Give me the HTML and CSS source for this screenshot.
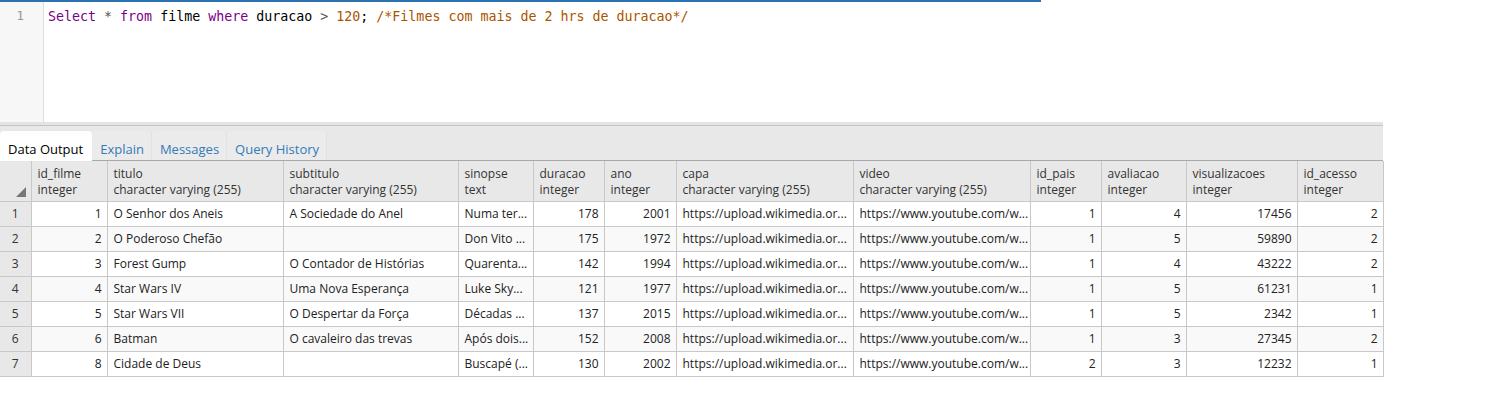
FILE: index.html
```html
<!DOCTYPE html>
<html>
<head>
<meta charset="utf-8">
<link rel="stylesheet" href="styles.css">
</head>
<body>
<div class="topbar"></div>
<div class="editor">
  <div class="gutter"><span class="lineno">1</span></div>
  <div class="code"><span class="kw">Select</span> <span class="op">*</span> <span class="kw">from</span> filme <span class="kw">where</span> duracao <span class="op">&gt;</span> <span class="num">120</span>; <span class="cm">/*Filmes com mais de 2 hrs de duracao*/</span></div>
</div>
<div class="panel">
  <div class="tabs">
    <div class="tab active">Data Output</div>
    <div class="tab">Explain</div>
    <div class="tab">Messages</div>
    <div class="tab">Query History</div>
  </div>
  <table class="grid">
    <colgroup>
      <col class="w31"><col class="w76"><col class="w176"><col class="w175"><col class="w75"><col class="w71"><col class="w72"><col class="w177"><col class="w177"><col class="w71"><col class="w85"><col class="w111"><col class="w86">
    </colgroup>
    <thead>
      <tr>
        <th class="corner"><span class="tri"></span></th>
        <th>id_filme<br>integer</th>
        <th>titulo<br>character varying (255)</th>
        <th>subtitulo<br>character varying (255)</th>
        <th>sinopse<br>text</th>
        <th>duracao<br>integer</th>
        <th>ano<br>integer</th>
        <th>capa<br>character varying (255)</th>
        <th>video<br>character varying (255)</th>
        <th>id_pais<br>integer</th>
        <th>avaliacao<br>integer</th>
        <th>visualizacoes<br>integer</th>
        <th>id_acesso<br>integer</th>
      </tr>
    </thead>
    <tbody>
      <tr><td class="rn">1</td><td class="n">1</td><td>O Senhor dos Aneis</td><td>A Sociedade do Anel</td><td>Numa ter...</td><td class="n">178</td><td class="n">2001</td><td>https://upload.wikimedia.or...</td><td>https://www.youtube.com/w...</td><td class="n">1</td><td class="n">4</td><td class="n">17456</td><td class="n">2</td></tr>
      <tr><td class="rn">2</td><td class="n">2</td><td>O Poderoso Chefão</td><td></td><td>Don Vito ...</td><td class="n">175</td><td class="n">1972</td><td>https://upload.wikimedia.or...</td><td>https://www.youtube.com/w...</td><td class="n">1</td><td class="n">5</td><td class="n">59890</td><td class="n">2</td></tr>
      <tr><td class="rn">3</td><td class="n">3</td><td>Forest Gump</td><td>O Contador de Histórias</td><td>Quarenta...</td><td class="n">142</td><td class="n">1994</td><td>https://upload.wikimedia.or...</td><td>https://www.youtube.com/w...</td><td class="n">1</td><td class="n">4</td><td class="n">43222</td><td class="n">2</td></tr>
      <tr><td class="rn">4</td><td class="n">4</td><td>Star Wars IV</td><td>Uma Nova Esperança</td><td>Luke Sky...</td><td class="n">121</td><td class="n">1977</td><td>https://upload.wikimedia.or...</td><td>https://www.youtube.com/w...</td><td class="n">1</td><td class="n">5</td><td class="n">61231</td><td class="n">1</td></tr>
      <tr><td class="rn">5</td><td class="n">5</td><td>Star Wars VII</td><td>O Despertar da Força</td><td>Décadas ...</td><td class="n">137</td><td class="n">2015</td><td>https://upload.wikimedia.or...</td><td>https://www.youtube.com/w...</td><td class="n">1</td><td class="n">5</td><td class="n">2342</td><td class="n">1</td></tr>
      <tr><td class="rn">6</td><td class="n">6</td><td>Batman</td><td>O cavaleiro das trevas</td><td>Após dois...</td><td class="n">152</td><td class="n">2008</td><td>https://upload.wikimedia.or...</td><td>https://www.youtube.com/w...</td><td class="n">1</td><td class="n">3</td><td class="n">27345</td><td class="n">2</td></tr>
      <tr><td class="rn">7</td><td class="n">8</td><td>Cidade de Deus</td><td></td><td>Buscapé (...</td><td class="n">130</td><td class="n">2002</td><td>https://upload.wikimedia.or...</td><td>https://www.youtube.com/w...</td><td class="n">2</td><td class="n">3</td><td class="n">12232</td><td class="n">1</td></tr>
    </tbody>
  </table>
</div>
</body>
</html>
```
FILE: styles.css
```css
html, body {
  margin: 0;
  padding: 0;
  background: #ffffff;
}
body {
  font-family: "Open Sans", "Liberation Sans", sans-serif;
  color: #222222;
}
.topbar {
  width: 1041px;
  height: 2px;
  background: #2c72b0;
}
.editor {
  display: flex;
  height: 120px;
  background: #ffffff;
}
.gutter {
  width: 44px;
  background: #f7f7f7;
  border-right: 1px solid #dddddd;
  box-sizing: border-box;
  text-align: right;
  padding: 6px 19px 0 0;
  font-family: "DejaVu Sans Mono", monospace;
  font-size: 13px;
  color: #999999;
}
.code {
  padding: 6px 0 0 4px;
  font-family: "DejaVu Sans Mono", monospace;
  font-size: 13.3px;
  line-height: 18px;
  color: #000000;
  white-space: pre;
}
.kw { color: #770088; }
.op { color: #555555; }
.num { color: #aa5500; }
.cm { color: #aa5500; }
.panel {
  width: 1383px;
  background: #e8e8e8;
  border-top: 3px solid #e4e4e4;
}
.tabs {
  display: flex;
  height: 36px;
  box-sizing: border-box;
  border-top: 1px solid #c4c4c4;
  border-bottom: 1px solid #a9a9a9;
  padding-top: 5px;
  align-items: stretch;
}
.tab {
  font-size: 13px;
  line-height: 18px;
  color: #337ab7;
  padding: 9px 7px 0 8px;
  background: #ebebeb;
  border-right: 1px solid #e2e2e2;
  border-radius: 4px 4px 0 0;
}
.tab.active {
  background: #ffffff;
  color: #000000;
  padding: 9px 9px 0 8px;
  margin-bottom: -1px;
  border-right: none;
}
.grid {
  border-collapse: collapse;
  table-layout: fixed;
  width: 1383px;
  font-size: 12px;
}
.w31 { width: 31px; }
.w76 { width: 76px; }
.w176 { width: 176px; }
.w175 { width: 175px; }
.w75 { width: 75px; }
.w71 { width: 71px; }
.w72 { width: 72px; }
.w177 { width: 177px; }
.w85 { width: 85px; }
.w111 { width: 111px; }
.w86 { width: 86px; }
.grid th {
  height: 40px;
  padding: 5px 6px 0 6px;
  box-sizing: border-box;
  vertical-align: top;
  text-align: left;
  font-weight: normal;
  color: #333333;
  line-height: 16px;
  background: #e8e8e8;
  border-right: 1px solid #c8c8c8;
  border-bottom: 1px solid #c8c8c8;
  white-space: nowrap;
  overflow: hidden;
}
.grid th.corner {
  position: relative;
}
.tri {
  position: absolute;
  right: 5px;
  bottom: 4px;
  width: 0;
  height: 0;
  border-style: solid;
  border-width: 0 0 10px 10px;
  border-color: transparent transparent #777777 transparent;
}
.grid td {
  height: 25px;
  padding: 0 5px 0 6px;
  box-sizing: border-box;
  background: #ffffff;
  border: 1px solid #c8c8c8;
  border-top: none;
  border-left: none;
  white-space: nowrap;
  overflow: hidden;
  color: #222222;
}
.grid tbody tr:nth-child(even) td {
  background: #f9f9f9;
}
.grid td.n {
  text-align: right;
}
.grid td.rn {
  text-align: center;
  background: #e8e8e8;
  padding: 0;
  color: #333333;
}
.grid tbody tr:nth-child(even) td.rn {
  background: #e8e8e8;
}
```
